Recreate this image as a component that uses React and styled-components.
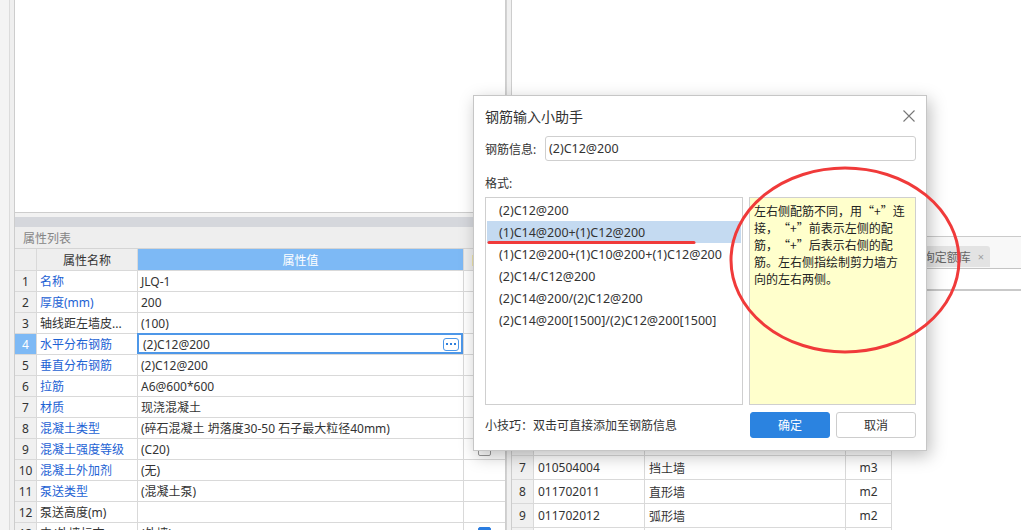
import React from 'react';
import styled, { createGlobalStyle } from 'styled-components';

// 页面基础样式
const GlobalStyle = createGlobalStyle`
  html, body {
    margin: 0;
    padding: 0;
  }
  body {
    font-family: "Noto Sans", "Noto Sans CJK SC", sans-serif;
    font-size: 12px;
    color: #333;
    background: #fff;
  }
  * {
    box-sizing: border-box;
  }
`;

const Screen = styled.div`
  position: relative;
  display: flex;
  width: 1021px;
  height: 530px;
  overflow: hidden;
  background: #f2f2f2;
`;

const Rail = styled.div`
  width: 15px;
  flex: none;
  border-right: 1px solid #cdcdcd;
  background: linear-gradient(to right, #f4f4f4 9px, #dcdcdc 9px, #dcdcdc 10px, #efefef 10px);
`;

/* ---------- 左侧：视图 + 属性列表 ---------- */

const LeftPane = styled.div`
  width: 491px;
  flex: none;
  display: flex;
  flex-direction: column;
  border-right: 1px solid #cdcdcd;
`;

const Viewport = styled.div`
  height: 213px;
  flex: none;
  background: #fff;
  border-bottom: 1px solid #cdcdcd;
`;

const Band = styled.div`
  height: 10px;
  flex: none;
  margin-top: 4px;
  background: #d5d7dc;
`;

const PanelTitle = styled.div`
  height: 22px;
  flex: none;
  display: flex;
  align-items: center;
  padding-left: 8px;
  background: #eeeeee;
  color: #858585;
  border-bottom: 1px solid #d4d4d4;
`;

const PropGrid = styled.div`
  flex: 1;
  display: grid;
  grid-template-columns: 22px 101px 326px 1fr;
  grid-template-rows: 22px;
  grid-auto-rows: 21px;
  background: #fff;
`;

const cellBase = `
  position: relative;
  display: flex;
  align-items: center;
  min-width: 0;
  white-space: nowrap;
  overflow: hidden;
  border-right: 1px solid #d9d9d9;
  border-bottom: 1px solid #d9d9d9;
`;

const HeadCell = styled.div`
  ${cellBase}
  justify-content: center;
  background: ${(p) => (p.$blue ? '#7db9f5' : '#eeeeee')};
  color: ${(p) => (p.$blue ? '#fff' : p.$accent ? '#e49a3a' : '#333')};
  border-right-color: ${(p) => (p.$last ? 'transparent' : '#d9d9d9')};
`;

const NumCell = styled.div`
  ${cellBase}
  justify-content: center;
  background: ${(p) => (p.$active ? '#7db9f5' : '#f0f0f0')};
  color: ${(p) => (p.$active ? '#fff' : '#333')};
`;

const NameCell = styled.div`
  ${cellBase}
  padding-left: 3px;
  color: ${(p) => (p.$link ? '#1d62d4' : '#333')};
`;

const ValueCell = styled.div`
  ${cellBase}
  padding: 0 4px 0 ${(p) => (p.$editing ? 5 : 3)}px;
  overflow: visible;
  z-index: ${(p) => (p.$editing ? 1 : 0)};

  ${(p) =>
    p.$editing &&
    `
    &::after {
      content: '';
      position: absolute;
      top: -1px;
      left: -1px;
      right: 0;
      bottom: 0;
      border: 2px solid #4d97e8;
      pointer-events: none;
    }
  `}
`;

const MoreButton = styled.span`
  margin-left: auto;
  width: 16px;
  height: 13px;
  border: 1px solid #4d97e8;
  border-radius: 3px;
  display: flex;
  align-items: center;
  justify-content: center;
  gap: 2px;

  & i {
    width: 2px;
    height: 2px;
    background: #2f7fdc;
  }
`;

const ExtraCell = styled.div`
  ${cellBase}
  justify-content: center;
  border-right: none;
`;

const Check = styled.span`
  width: 13px;
  height: 13px;
  border-radius: 2px;
  border: 1px solid ${(p) => (p.$on ? '#2a7de1' : '#9a9a9a')};
  background: ${(p) => (p.$on ? '#2a7de1' : '#fff')};
  display: flex;
  align-items: center;
  justify-content: center;
`;

/* ---------- 中间分隔条 ---------- */

const Splitter = styled.div`
  width: 6px;
  flex: none;
  background: #f0f0f0;
  border-left: 1px solid #d2d2d2;
  border-right: 1px solid #cdcdcd;
`;

/* ---------- 右侧：绘图区 + 定额库表格 ---------- */

const RightPane = styled.div`
  flex: 1;
  display: flex;
  flex-direction: column;
  background: #fff;
`;

const Canvas = styled.div`
  height: 237px;
  flex: none;
  background: #fff;
  border-bottom: 1px solid #cbcbcb;
`;

const TabStrip = styled.div`
  height: 32px;
  flex: none;
  display: flex;
  align-items: flex-end;
  justify-content: flex-end;
  gap: 2px;
  padding: 0 31px 1px 0;
  background: #f8f8f8;
  border-bottom: 1px solid #c4c4c4;
`;

const Tab = styled.div`
  height: 21px;
  display: flex;
  align-items: center;
  padding: 0 6px 0 8px;
  background: #e3e3e3;
  border-radius: 3px 3px 0 0;
  color: #666;

  & span {
    margin-left: 7px;
    color: #a0a0a0;
    font-size: 11px;
  }
`;

const Toolbar = styled.div`
  height: 22px;
  flex: none;
  border-bottom: 2px solid #c9c9c9;
`;

const QuotaGrid = styled.div`
  width: 380px;
  display: grid;
  grid-template-columns: 22px 111px 201px 46px;
  grid-template-rows: 21px;
  grid-auto-rows: 24px;
`;

const QCell = styled.div`
  display: flex;
  align-items: center;
  justify-content: ${(p) => (p.$center ? 'center' : 'flex-start')};
  padding-left: ${(p) => (p.$center ? 0 : 4)}px;
  white-space: nowrap;
  overflow: hidden;
  background: ${(p) => (p.$shade ? '#f0f0f0' : '#fff')};
  border-right: 1px solid #d9d9d9;
  border-bottom: 1px solid #d9d9d9;
`;

/* ---------- 钢筋输入小助手 对话框 ---------- */

const Dialog = styled.div`
  position: absolute;
  left: 473px;
  top: 95px;
  width: 454px;
  height: 356px;
  display: flex;
  flex-direction: column;
  padding: 0 10px 0 11px;
  background: #fff;
  border: 1px solid #c6c6c6;
  box-shadow: 3px 5px 16px rgba(0, 0, 0, 0.26);
  z-index: 5;
`;

const TitleRow = styled.div`
  height: 40px;
  flex: none;
  display: flex;
  align-items: center;
  justify-content: space-between;
  font-family: "Noto Sans CJK SC", sans-serif;
  font-size: 14px;
  color: #333;
`;

const CloseButton = styled.span`
  display: flex;
  margin-right: 1px;
`;

const FieldRow = styled.div`
  height: 25px;
  flex: none;
  display: flex;
  align-items: center;
`;

const FieldLabel = styled.span`
  width: 60px;
  flex: none;
`;

const Input = styled.div`
  flex: 1;
  height: 25px;
  display: flex;
  align-items: center;
  padding: 0 3px;
  border: 1px solid #cfcfcf;
  border-radius: 3px;
  font-size: 12.5px;
`;

const SectionLabel = styled.div`
  flex: none;
  margin: 14px 0 5px;
  line-height: 17px;
`;

const ListRow = styled.div`
  height: 208px;
  flex: none;
  display: flex;
  gap: 6px;
`;

const OptionList = styled.div`
  width: 258px;
  flex: none;
  padding: 1px;
  border: 1px solid #cfcfcf;
`;

const Option = styled.div`
  height: 22px;
  display: flex;
  align-items: center;
  padding-left: 12px;
  font-size: 12.5px;
  white-space: nowrap;
  background: ${(p) => (p.$selected ? '#c4daf1' : 'transparent')};
`;

const Hint = styled.div`
  flex: 1;
  padding: 4px 6px 4px 4px;
  border: 1px solid #cfcfcf;
  background: #ffffcc;
  font-family: "Noto Sans CJK SC", sans-serif;
  font-size: 12px;
  line-height: 17px;
  color: #222;
`;

// 全角引号：占一个字宽，开引号靠右、闭引号靠左
const Quote = styled.span`
  display: inline-block;
  width: 1em;
  text-align: ${(p) => (p.$open ? 'right' : 'left')};
`;

const Footer = styled.div`
  height: 26px;
  flex: none;
  margin-top: 7px;
  display: flex;
  align-items: center;
  gap: 6px;
`;

const Tip = styled.span`
  flex: 1;
`;

const Button = styled.button`
  width: 80px;
  height: 26px;
  padding: 0;
  font: inherit;
  border-radius: 3px;
  border: 1px solid ${(p) => (p.$primary ? '#2b83e0' : '#cdcdcd')};
  background: ${(p) => (p.$primary ? '#2b83e0' : '#fff')};
  color: ${(p) => (p.$primary ? '#fff' : '#333')};
`;

// 红色批注（圈和下划线）
const Markup = styled.svg`
  position: absolute;
  left: 0;
  top: 0;
  width: 1021px;
  height: 530px;
  pointer-events: none;
  z-index: 6;
`;

const properties = [
  { name: '名称', value: 'JLQ-1', link: true },
  { name: '厚度(mm)', value: '200', link: true },
  { name: '轴线距左墙皮...', value: '(100)' },
  { name: '水平分布钢筋', value: '(2)C12@200', link: true, editing: true },
  { name: '垂直分布钢筋', value: '(2)C12@200', link: true },
  { name: '拉筋', value: 'A6@600*600', link: true },
  { name: '材质', value: '现浇混凝土', link: true },
  { name: '混凝土类型', value: '(碎石混凝土 坍落度30-50 石子最大粒径40mm)', link: true },
  { name: '混凝土强度等级', value: '(C20)', link: true, check: 'off' },
  { name: '混凝土外加剂', value: '(无)', link: true },
  { name: '泵送类型', value: '(混凝土泵)', link: true },
  { name: '泵送高度(m)', value: '' },
  { name: '内/外墙标志', value: '(外墙)', check: 'on' },
];

const quotas = [
  ['010504001', '直形墙', 'm3'],
  ['010504002', '弧形墙', 'm3'],
  ['010504003', '短肢剪力墙', 'm3'],
  ['010504001', '直形墙', 'm3'],
  ['010504002', '弧形墙', 'm3'],
  ['010504003', '短肢剪力墙', 'm3'],
  ['010504004', '挡土墙', 'm3'],
  ['011702011', '直形墙', 'm2'],
  ['011702012', '弧形墙', 'm2'],
  ['011702013', '短肢剪力墙', 'm2'],
];

const formats = [
  '(2)C12@200',
  '(1)C14@200+(1)C12@200',
  '(1)C12@200+(1)C10@200+(1)C12@200',
  '(2)C14/C12@200',
  '(2)C14@200/(2)C12@200',
  '(2)C14@200[1500]/(2)C12@200[1500]',
];

function PropertyList() {
  return (
    <>
      <PanelTitle>属性列表</PanelTitle>
      <PropGrid>
        <HeadCell />
        <HeadCell>属性名称</HeadCell>
        <HeadCell $blue>属性值</HeadCell>
        <HeadCell $accent $last>附加</HeadCell>
        {properties.map((row, i) => (
          <React.Fragment key={i}>
            <NumCell $active={row.editing}>{i + 1}</NumCell>
            <NameCell $link={row.link}>{row.name}</NameCell>
            <ValueCell $editing={row.editing}>
              {row.value}
              {row.editing && (
                <MoreButton>
                  <i />
                  <i />
                  <i />
                </MoreButton>
              )}
            </ValueCell>
            <ExtraCell>
              {row.check && (
                <Check $on={row.check === 'on'}>
                  {row.check === 'on' && (
                    <svg width="9" height="8" viewBox="0 0 9 8">
                      <path d="M1 4 L3.5 6.5 L8 1.5" fill="none" stroke="#fff" strokeWidth="1.6" />
                    </svg>
                  )}
                </Check>
              )}
            </ExtraCell>
          </React.Fragment>
        ))}
      </PropGrid>
    </>
  );
}

function QuotaTable() {
  return (
    <QuotaGrid>
      <QCell $shade $center />
      <QCell $shade $center>编码</QCell>
      <QCell $shade $center>名称</QCell>
      <QCell $shade $center>单位</QCell>
      {quotas.map(([code, name, unit], i) => (
        <React.Fragment key={i}>
          <QCell $shade $center>{i + 1}</QCell>
          <QCell>{code}</QCell>
          <QCell>{name}</QCell>
          <QCell $center>{unit}</QCell>
        </React.Fragment>
      ))}
    </QuotaGrid>
  );
}

function QuotedPlus() {
  return (
    <>
      <Quote $open>“</Quote>+<Quote>”</Quote>
    </>
  );
}

function RebarHelper() {
  return (
    <Dialog>
      <TitleRow>
        钢筋输入小助手
        <CloseButton>
          <svg width="12" height="12" viewBox="0 0 12 12">
            <path d="M0.5 0.5 L11.5 11.5 M11.5 0.5 L0.5 11.5" stroke="#777" strokeWidth="1.1" />
          </svg>
        </CloseButton>
      </TitleRow>
      <FieldRow>
        <FieldLabel>钢筋信息:</FieldLabel>
        <Input>(2)C12@200</Input>
      </FieldRow>
      <SectionLabel>格式:</SectionLabel>
      <ListRow>
        <OptionList>
          {formats.map((f, i) => (
            <Option key={f} $selected={i === 1}>
              {f}
            </Option>
          ))}
        </OptionList>
        <Hint>
          左右侧配筋不同，用<QuotedPlus />连接，<QuotedPlus />前表示左侧的配筋，<QuotedPlus />
          后表示右侧的配筋。左右侧指绘制剪力墙方向的左右两侧。
        </Hint>
      </ListRow>
      <Footer>
        <Tip>小技巧：双击可直接添加至钢筋信息</Tip>
        <Button $primary>确定</Button>
        <Button>取消</Button>
      </Footer>
    </Dialog>
  );
}

export default function App() {
  return (
    <>
      <GlobalStyle />
      <Screen>
        <Rail />
        <LeftPane>
          <Viewport />
          <Band />
          <PropertyList />
        </LeftPane>
        <Splitter />
        <RightPane>
          <Canvas />
          <TabStrip>
            <Tab>
              查询匹配清单<span>×</span>
            </Tab>
            <Tab>
              查询匹配定额<span>×</span>
            </Tab>
            <Tab>
              查询定额库<span>×</span>
            </Tab>
          </TabStrip>
          <Toolbar />
          <QuotaTable />
        </RightPane>
        <RebarHelper />
        <Markup viewBox="0 0 1021 530">
          <ellipse cx="845" cy="260" rx="114" ry="92" fill="none" stroke="#f03a3a" strokeWidth="3" />
          <path d="M489 242.5 L694 242.5" stroke="#f03a3a" strokeWidth="3" strokeLinecap="round" />
        </Markup>
      </Screen>
    </>
  );
}
